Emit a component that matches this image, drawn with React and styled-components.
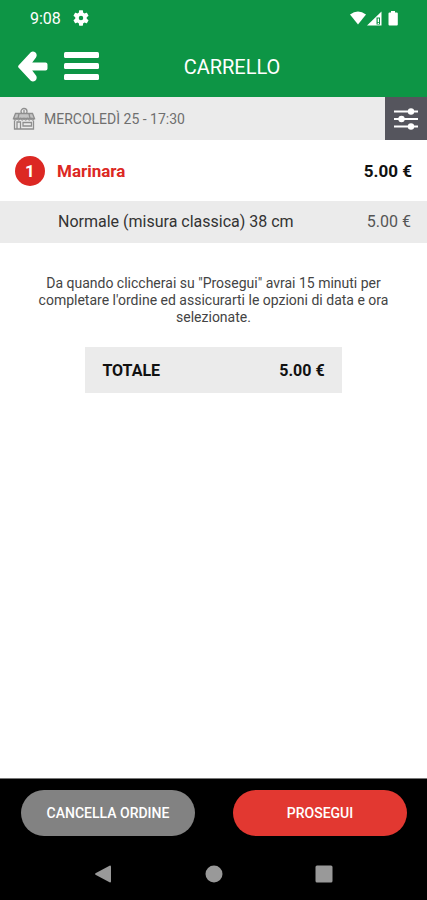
import React from "react";
import styled, { createGlobalStyle } from "styled-components";

const items = [
  {
    id: 1,
    qty: 1,
    name: "Marinara",
    price: "5.00 €",
    size: "Normale (misura classica) 38 cm",
    sizePrice: "5.00 €",
  },
];

const StatusBar = () => (
  <Status>
    <span>9:08</span>
    <svg width="16" height="16" viewBox="2 2 20 20" fill="#fff">
      <path d="M19.14 12.94c.04-.3.06-.61.06-.94 0-.32-.02-.64-.07-.94l2.03-1.58c.18-.14.23-.41.12-.61l-1.92-3.32c-.12-.22-.37-.29-.59-.22l-2.39.96c-.5-.38-1.03-.7-1.62-.94l-.36-2.54c-.04-.24-.24-.41-.48-.41h-3.84c-.24 0-.43.17-.47.41l-.36 2.54c-.59.24-1.13.57-1.62.94l-2.39-.96c-.22-.08-.47 0-.59.22L2.74 8.87c-.12.21-.08.47.12.61l2.03 1.58c-.05.3-.09.63-.09.94s.02.64.07.94l-2.03 1.58c-.18.14-.23.41-.12.61l1.92 3.32c.12.22.37.29.59.22l2.39-.96c.5.38 1.03.7 1.62.94l.36 2.54c.05.24.24.41.48.41h3.84c.24 0 .44-.17.47-.41l.36-2.54c.59-.24 1.13-.56 1.62-.94l2.39.96c.22.08.47 0 .59-.22l1.92-3.32c.12-.22.07-.47-.12-.61l-2.01-1.58zM12 14.8a2.8 2.8 0 1 1 0-5.6 2.8 2.8 0 0 1 0 5.6z" />
    </svg>
    <Signals>
      <svg width="48" height="16" viewBox="0 0 48 16" fill="#fff">
        <path d="M0 4.500Q8 -1.500 16 4.500L8 14.500Z" />
        <path d="M17 15.500L31.500 1.500V15.500Z" />
        <path d="M26.500 7.500h3.500v7h-3.500z" fill="#0d9545" />
        <path d="M27.700 8.500h1.300v3.400h-1.300zM27.700 12.800h1.300v1.300h-1.300z" />
        <path d="M41 1h4v1.500h1.800q1 0 1 1V14.500q0 1-1 1H39.500q-1 0-1-1V3.500q0-1 1-1H41z" />
      </svg>
    </Signals>
  </Status>
);

const Header = () => (
  <Top>
    <StatusBar />
    <TitleBar>
      <IconButton aria-label="Indietro">
        <svg width="30" height="31" viewBox="0 0 30 31">
          <path
            d="M0.700 14.200L12.800 1.200Q15 -0.500 17.500 1.500Q19.600 3.800 18 6.400L14.200 11.500H27.500Q29.500 11.500 29.500 13.500V17.500Q29.500 19.500 27.500 19.500H14.200L18 24.600Q19.600 27.200 17.500 29.500Q15 31.500 12.800 29.800L0.700 16.800Q-0.500 15.500 0.700 14.200Z"
            fill="#fff"
          />
        </svg>
      </IconButton>
      <IconButton aria-label="Menu">
        <svg width="35" height="31" viewBox="0 0 35 31" fill="#fff">
          <rect y="1" width="35" height="6" rx="1.500" />
          <rect y="12" width="35" height="6" rx="1.500" />
          <rect y="23" width="35" height="6" rx="1.500" />
        </svg>
      </IconButton>
      <Title>CARRELLO</Title>
    </TitleBar>
  </Top>
);

const DateBar = () => (
  <DateRow>
    <svg width="24" height="24" viewBox="0 0 24 24" fill="none" stroke="#8e8e8e" strokeWidth="1.300">
      <circle cx="12" cy="4.500" r="3" />
      <path d="M12 3v3" />
      <path d="M3.500 6.500H20.500L22.500 11.500H1.500Z" fill="#c4c4c4" />
      <path d="M1.500 11.500q1.700 3 3.500 0q1.700 3 3.500 0q1.700 3 3.500 0q1.700 3 3.500 0q1.700 3 3.500 0q1.700 3 3.500 0" />
      <path d="M7 6.500L6 11.500M17 6.500L18 11.500" />
      <path d="M2.500 13.500V22H21.500V13.500" />
      <path d="M5 22V15H8.500V22M11 15.500H19.500V19H11Z" />
    </svg>
    <DateText>MERCOLEDÌ 25 - 17:30</DateText>
    <Options aria-label="Opzioni">
      <svg width="26" height="24" viewBox="0 0 26 24" fill="#fff">
        <path d="M1 3.500h24v2H1zM1 11h24v2H1zM1 18.500h24v2H1z" />
        <circle cx="18" cy="4.500" r="3.200" />
        <circle cx="8.500" cy="12" r="3.200" />
        <circle cx="18" cy="19.500" r="3.200" />
      </svg>
    </Options>
  </DateRow>
);

const App = () => {
  return (
    <>
      <GlobalStyle />
      <Page>
        <Header />
        <DateBar />
        <Main>
          {items.map((item) => (
            <article key={item.id}>
              <ItemRow>
                <Badge>{item.qty}</Badge>
                <Name>{item.name}</Name>
                <Price>{item.price}</Price>
              </ItemRow>
              <SizeRow>
                <span>{item.size}</span>
                <span>{item.sizePrice}</span>
              </SizeRow>
            </article>
          ))}
          <Notice>
            Da quando cliccherai su "Prosegui" avrai 15 minuti per completare
            l'ordine ed assicurarti le opzioni di data e ora selezionate.
          </Notice>
          <Total>
            <span>TOTALE</span>
            <span>5.00 €</span>
          </Total>
        </Main>
        <Footer>
          <Actions>
            <Button>CANCELLA ORDINE</Button>
            <ConfirmButton>PROSEGUI</ConfirmButton>
          </Actions>
          <SystemNav>
            <IconButton aria-label="Back">
              <svg width="18" height="18" viewBox="0 0 18 18" fill="#999">
                <path d="M16 0.500q1 0 1 1V16.500q0 1-1 1L1.500 9.700q-1-.7 0-1.400z" />
              </svg>
            </IconButton>
            <IconButton aria-label="Home">
              <svg width="18" height="18" viewBox="0 0 18 18" fill="#999">
                <circle cx="9" cy="9" r="8.500" />
              </svg>
            </IconButton>
            <IconButton aria-label="Recenti">
              <svg width="18" height="18" viewBox="0 0 18 18" fill="#999">
                <rect x="0.500" y="0.500" width="17" height="17" rx="1.500" />
              </svg>
            </IconButton>
          </SystemNav>
        </Footer>
      </Page>
    </>
  );
};

const GlobalStyle = createGlobalStyle`
  * {
    box-sizing: border-box;
  }

  body {
    margin: 0;
    background-color: #fff;
    font-family: Roboto, "Liberation Sans", sans-serif;
  }
`;

const Page = styled.div`
  min-height: 100vh;
  display: flex;
  flex-direction: column;
`;

const Top = styled.header`
  background-color: #0d9545;
  color: #fff;
`;

const Status = styled.div`
  display: flex;
  align-items: center;
  height: 36px;
  gap: 12px;
  padding: 0 29px 0 30px;
  font-size: 16px;
`;

const Signals = styled.div`
  display: flex;
  margin-left: auto;
`;

const TitleBar = styled.div`
  display: grid;
  grid-template-columns: 30px 35px 1fr 44px;
  column-gap: 16px;
  align-items: center;
  height: 61px;
  padding: 0 18px;
`;

const Title = styled.h1`
  margin: 0;
  font-size: 20px;
  font-weight: 400;
  text-align: center;
`;

const IconButton = styled.button`
  display: flex;
  border: none;
  padding: 0;
  background: none;
  cursor: pointer;
`;

const DateRow = styled.div`
  display: flex;
  align-items: center;
  height: 43px;
  gap: 8px;
  padding-left: 12px;
  background-color: #ebebeb;
`;

const DateText = styled.span`
  flex: 1;
  font-size: 14px;
  line-height: 20px;
  color: #6f6f6f;
`;

const Options = styled.button`
  display: flex;
  align-items: center;
  justify-content: center;
  align-self: stretch;
  width: 42px;
  border: none;
  padding: 0;
  background-color: #55555d;
  cursor: pointer;
`;

const Main = styled.main`
  flex: 1;
`;

const ItemRow = styled.div`
  display: flex;
  align-items: center;
  height: 61px;
  gap: 12px;
  padding: 0 15px;
  font-size: 17px;
`;

const Badge = styled.span`
  display: flex;
  align-items: center;
  justify-content: center;
  width: 30px;
  height: 30px;
  border-radius: 50%;
  background-color: #dc2823;
  color: #fff;
  font-weight: 700;
`;

const Name = styled.h2`
  flex: 1;
  margin: 0;
  font-size: 17px;
  font-weight: 700;
  color: #dc2823;
`;

const Price = styled.span`
  font-weight: 700;
  color: #111;
`;

const SizeRow = styled.div`
  display: flex;
  align-items: center;
  justify-content: space-between;
  height: 42px;
  padding: 0 16px 0 58px;
  background-color: #ebebeb;
  font-size: 16px;
  line-height: 20px;
  color: #333;

  & > span:last-child {
    color: #555;
  }
`;

const Notice = styled.p`
  margin: 32px 28px 21px;
  font-size: 14px;
  line-height: 17px;
  text-align: center;
  color: #444;
`;

const Total = styled.div`
  display: flex;
  align-items: center;
  justify-content: space-between;
  width: 60%;
  height: 46px;
  margin: 0 auto;
  padding: 0 17px;
  background-color: #ebebeb;
  font-size: 16px;
  font-weight: 700;
  color: #111;
`;

const Footer = styled.footer`
  border-top: 1px solid #777;
  background-color: #000;
`;

const Actions = styled.div`
  display: grid;
  grid-template-columns: 1fr 1fr;
  gap: 38px;
  padding: 11px 20px 0 21px;
`;

const Button = styled.button`
  height: 46px;
  border: none;
  border-radius: 23px;
  padding: 0;
  background-color: #828282;
  font-family: inherit;
  font-size: 14px;
  font-weight: 500;
  color: #fff;
  cursor: pointer;
`;

const ConfirmButton = styled(Button)`
  background-color: #e23831;
`;

const SystemNav = styled.nav`
  display: flex;
  align-items: center;
  justify-content: space-between;
  height: 64px;
  padding: 12px 94px 0;
`;

export default App;
